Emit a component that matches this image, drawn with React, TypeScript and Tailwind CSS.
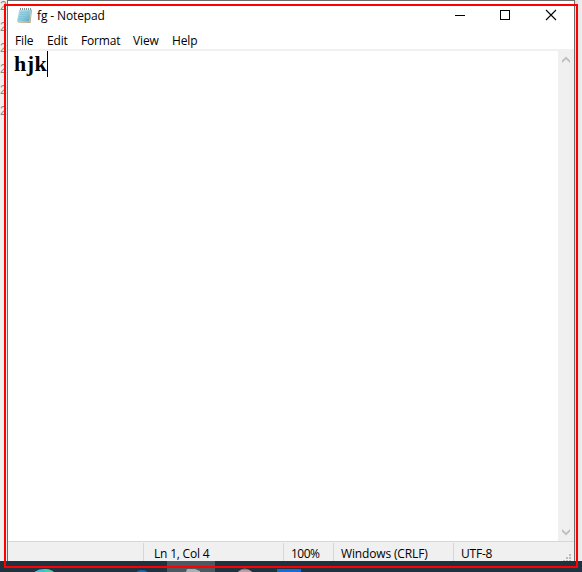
const menus = [
  { label: "File", cls: "w-[32px]" },
  { label: "Edit", cls: "w-[34px]" },
  { label: "Format", cls: "w-[52px]" },
  { label: "View", cls: "w-[39px]" },
  { label: "Help", cls: "w-[40px]" },
];

function NoteIcon() {
  return (
    <svg width="17" height="17" viewBox="0 0 17 17" className="mt-[6px] shrink-0">
      <defs>
        <linearGradient id="paper" x1="0" y1="0" x2="1" y2="1">
          <stop offset="0" stopColor="#b5e0eb" />
          <stop offset="0.55" stopColor="#8bcbdc" />
          <stop offset="1" stopColor="#4d9fbd" />
        </linearGradient>
      </defs>
      <path d="m4 2 12 .5L14.5 16 2 15.5z" fill="#b49a6c" />
      <path d="M3.5 2h11.7l-1.7 13L1 14.5z" fill="url(#paper)" />
      <path d="M1 14.5 13.5 15 15 4" fill="none" stroke="#c4dce0" strokeWidth=".7" />
      <path d="M4 5.5h9M3.7 7.5h9M3.4 9.5h9M3.1 11.5h9" stroke="#79b9cc" strokeWidth=".5" />
      <path d="M3.5 2.2h12" stroke="#f4f6f6" strokeWidth="1.8" />
      <path d="M4.5 1v2M6.5 1v2M8.5 1v2M10.5 1v2M12.5 1v2M14.5 1v2" stroke="#70787a" strokeWidth=".8" />
    </svg>
  );
}

function Arrow({ down = false }: { down?: boolean }) {
  return (
    <svg width="8" height="7" viewBox="0 0 8 7" className={down ? "rotate-180" : ""}>
      <path d="M4 .5 8 4.5V7L4 3.2 0 7V4.5z" fill="#bfbfbf" />
    </svg>
  );
}

function TitleBar() {
  return (
    <header className="flex h-[30px] shrink-0 pl-[8px]">
      <NoteIcon />
      <span className="ml-[4px] mt-[6px] w-[90px] text-[12px] leading-[18px] tracking-[-0.12px]">fg - Notepad</span>
      <svg width="103" height="12" viewBox="0 0 103 12" className="ml-auto mr-[16px] mt-[8px]">
        <path d="M0 6.5h10" stroke="#000" />
        <rect x="45.5" y="1.5" width="9" height="9" fill="none" stroke="#000" />
        <path d="m91 1 10 10M101 1 91 11" stroke="#000" strokeWidth="1.1" />
      </svg>
    </header>
  );
}

function StatusBar() {
  return (
    <footer className="flex h-[20px] shrink-0 border-t border-[#d7d7d7] bg-[#f0f0f0] pt-px text-[12px] leading-[21px]">
      <div className="w-[136px] border-r border-[#d7d7d7]" />
      <div className="w-[140px] border-r border-[#d7d7d7] pl-[10px] tracking-[-0.2px]">Ln 1, Col 4</div>
      <div className="w-[50px] border-r border-[#d7d7d7] pl-[7px] tracking-[-0.5px]">100%</div>
      <div className="w-[120px] border-r border-[#d7d7d7] pl-[7px] tracking-[-0.15px]">Windows (CRLF)</div>
      <div className="flex grow pl-[7px]">
        <span className="tracking-[-0.2px]">UTF-8</span>
        <svg width="9" height="9" viewBox="0 0 9 9" className="ml-auto mr-[2px] mt-[11px]">
          <path d="M6 0h2v2H6zM3 3h2v2H3zM6 3h2v2H6zM0 6h2v2H0zM3 6h2v2H3zM6 6h2v2H6z" fill="#bcbcbc" />
        </svg>
      </div>
    </footer>
  );
}

export default function App() {
  return (
    <div className="relative flex h-[572px] w-[582px] flex-col overflow-hidden bg-[#eeeeee] font-['Open_Sans','Noto_Sans',sans-serif] text-black">
      <div className="flex h-[561px]">
        <aside className="w-[7px] shrink-0 bg-[#f0f0f0] font-['Liberation_Sans',sans-serif] text-[12px] leading-[21px] text-[#858585]">
          <div className="-mt-[4px]">
            {[0, 1, 2, 3, 4, 5].map((n) => <div key={n}>2</div>)}
          </div>
        </aside>
        <main className="flex w-[568px] shrink-0 flex-col border-x border-t border-[#6d6d6d] bg-white">
          <TitleBar />
          <nav className="flex h-[20px] shrink-0 border-b-2 border-[#f0f0f0] pl-[7px] text-[12px] leading-[20px]">
            {menus.map((menu) => <span key={menu.label} className={`${menu.cls} tracking-[-0.15px]`}>{menu.label}</span>)}
          </nav>
          <div className="flex min-h-0 grow">
            <section className="flex grow items-start pl-[6px]">
              <span className="w-[33px] font-['Liberation_Serif',serif] text-[22px] font-bold leading-[26px] tracking-[0.5px]">hjk</span>
              <i className="h-[26px] w-px bg-black" />
            </section>
            <div className="flex w-[16px] flex-col items-center justify-between bg-[#f0f0f0] pb-[5px] pt-[5px]">
              <Arrow />
              <Arrow down />
            </div>
          </div>
          <StatusBar />
        </main>
        <div className="grow bg-gradient-to-r from-[#dddddd] to-[#f0f0f0]" />
      </div>
      <div className="h-[11px] bg-[#203341]">
        <svg width="582" height="11" viewBox="0 0 582 11">
          <rect width="582" height="11" fill="#20313f" />
          <rect x="167" width="48" height="11" fill="#4c5961" />
          <ellipse cx="44" cy="16" rx="12" ry="8" fill="#3dbfd8" />
          <path d="M44 8q7 0 10 3h-9z" fill="#4bcda6" />
          <ellipse cx="142" cy="14" rx="7" ry="5" fill="#1169b3" />
          <path d="M187 8h8l5 2v1h-14z" fill="#a9b1b2" />
          <ellipse cx="245" cy="14" rx="8" ry="6" fill="#bc9e9f" />
          <path d="M240 9q5-3 9 0z" fill="#d25760" />
          <rect x="277" y="8" width="24" height="3" fill="#126bda" />
        </svg>
      </div>
      <div className="pointer-events-none absolute left-[4px] top-[4px] h-[564px] w-[574px] border-2 border-[#ff0000]" />
    </div>
  );
}
